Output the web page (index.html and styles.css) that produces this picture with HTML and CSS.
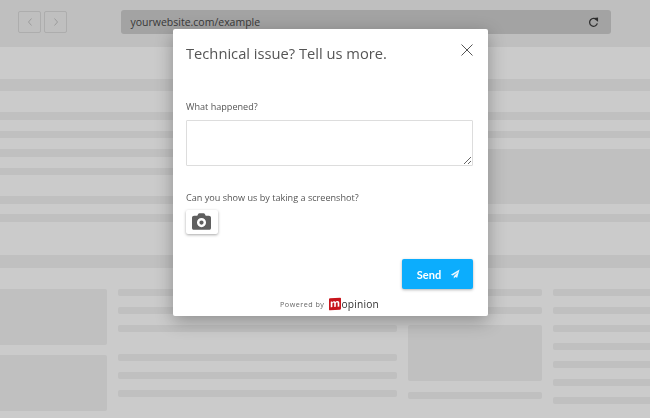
FILE: index.html
```html
<!DOCTYPE html>
<html lang="en">
<head>
  <meta charset="UTF-8">
  <title>Technical issue</title>
  <link rel="stylesheet" href="styles.css">
</head>
<body>

<div class="browser">
  <div class="topbar">
    <div class="nav-btn">
      <svg width="8" height="10" viewBox="0 0 8 10"><path d="M5.500 1.500 2.500 5l3 3.500" /></svg>
    </div>
    <div class="nav-btn">
      <svg width="8" height="10" viewBox="0 0 8 10"><path d="M2.500 1.500 5.500 5l-3 3.500" /></svg>
    </div>
    <div class="urlbar">
      <span>yourwebsite.com/example</span>
      <svg class="reload" width="11" height="11" viewBox="0 0 12 12">
        <path d="M9.600 3.400A4.300 4.300 0 1 0 10.200 7" />
        <path class="fill" d="M6.500 1 11 .6v4.800z" />
      </svg>
    </div>
  </div>

  <div class="hero">
    <div class="bar band"></div>
    <div class="hero-cols">
      <div class="hero-left">
        <div class="bar thin"></div>
        <div class="bar thin"></div>
        <div class="bar thin"></div>
        <div class="bar thin"></div>
        <div class="bar thin last"></div>
      </div>
      <div class="hero-right">
        <div class="bar thin"></div>
        <div class="bar thin"></div>
        <div class="bar block"></div>
      </div>
    </div>
    <div class="bar thin single"></div>
    <div class="bar band lower"></div>
  </div>

  <div class="columns">
    <div class="col col-a">
      <div class="tile"></div>
      <div class="tile"></div>
    </div>
    <div class="col col-b">
      <div class="line"></div>
      <div class="line"></div>
      <div class="line"></div>
      <div class="line gap"></div>
      <div class="line"></div>
      <div class="line"></div>
    </div>
    <div class="col col-c">
      <div class="line"></div>
      <div class="line"></div>
      <div class="tile mid"></div>
      <div class="line"></div>
    </div>
    <div class="col col-d">
      <div class="line"></div>
      <div class="line"></div>
      <div class="line"></div>
      <div class="line"></div>
      <div class="line"></div>
      <div class="line"></div>
      <div class="line"></div>
    </div>
  </div>
</div>

<div class="modal">
  <div class="modal-head">
    <h2>Technical issue? Tell us more.</h2>
    <svg class="close" width="12" height="12" viewBox="0 0 12 12"><path d="M.5.500l11 11M11.500.500l-11 11" /></svg>
  </div>

  <label class="field-label" for="what">What happened?</label>
  <textarea id="what" class="field"></textarea>

  <p class="field-label second">Can you show us by taking a screenshot?</p>
  <button class="shot-btn" aria-label="Add screenshot">
    <svg width="19" height="17" viewBox="0 0 18 16" preserveAspectRatio="none">
      <path fill-rule="evenodd" d="M2 2.500h3L6 .8C6.200.4 6.500.2 7 .2h4c.5 0 .8.2 1 .6l1 1.700h3c1.100 0 2 .9 2 2V14c0 1.100-.9 1.800-2 1.800H2c-1.100 0-2-.7-2-1.800V4.500c0-1.100.9-2 2-2zM9 4.700a4.300 4.300 0 1 0 0 8.600 4.300 4.300 0 0 0 0-8.600zM9 7a2 2 0 1 1 0 4 2 2 0 0 1 0-4z" />
    </svg>
  </button>

  <div class="actions">
    <button class="send-btn">
      Send
      <svg width="10" height="10" viewBox="0 0 10 10">
        <path d="M9.500.5.800 5.700l2 .9L8 3 3.800 7.300v2.200l1.500-1.600 1.900.8z" />
      </svg>
    </button>
  </div>

  <div class="powered">
    <span>Powered by</span>
    <span class="logo"><span class="logo-m">m</span>opinion</span>
  </div>
</div>

</body>
</html>
```

FILE: styles.css
```css
html, body {
  margin: 0;
  height: 100%;
}

body {
  position: relative;
  width: 650px;
  height: 418px;
  overflow: hidden;
  background: #cbcbcb;
  font-family: "Open Sans", sans-serif;
  filter: blur(0.35px);
}

/* greyed out page behind the modal */
.browser {
  height: 418px;
  overflow: hidden;
}

.topbar {
  display: flex;
  align-items: flex-start;
  height: 37px;
  padding: 10px 0 0 18px;
  background: #bfbfbf;
}

.nav-btn {
  display: flex;
  align-items: center;
  justify-content: center;
  box-sizing: border-box;
  width: 23px;
  height: 22px;
  margin: 1px 3px 0 0;
  border: 1px solid #adadad;
  border-radius: 2px;
}

.nav-btn svg path {
  fill: none;
  stroke: #9c9c9c;
  stroke-width: 1;
}

.urlbar {
  display: flex;
  align-items: center;
  justify-content: space-between;
  box-sizing: border-box;
  width: 490px;
  height: 24px;
  margin-left: 51px;
  padding: 0 12px 0 9.500px;
  background: #a3a3a3;
  border-radius: 3px;
  font-size: 10.500px;
  color: #383838;
}

.reload path {
  fill: none;
  stroke: #2e2e2e;
  stroke-width: 1.400;
}

.reload .fill {
  fill: #2e2e2e;
  stroke: none;
}

.hero {
  padding-top: 32px;
}

.bar {
  background: #c0c0c0;
}

.band {
  height: 12px;
}

.hero-cols {
  display: grid;
  grid-template-columns: 325px 325px;
  margin-top: 21px;
}

.thin {
  height: 7.500px;
  margin-bottom: 11px;
}

.thin.last {
  margin-top: 21px;
  margin-bottom: 0;
}

.block {
  height: 55px;
}

.single {
  margin: 10px 0 0;
}

.lower {
  height: 13px;
  margin-top: 33px;
}

.columns {
  display: flex;
  gap: 11px;
  margin-top: 21px;
}

.col {
  flex: none;
  display: flex;
  flex-direction: column;
}

.col-a {
  width: 107px;
  gap: 10px;
}

.col-b {
  width: 279px;
}

.col-c {
  width: 134px;
}

.col-d {
  width: 110px;
}

.tile {
  height: 56px;
  background: #c0c0c0;
  border-radius: 0 2px 2px 0;
}

.mid {
  margin-bottom: 11px;
  border-radius: 2px;
}

.line {
  height: 7.500px;
  margin-bottom: 10.500px;
  background: #c0c0c0;
  border-radius: 2px;
}

.gap {
  margin-top: 11px;
}

/* modal */
.modal {
  position: absolute;
  top: 29px;
  left: 173px;
  box-sizing: border-box;
  width: 314.500px;
  height: 287px;
  padding: 0 14.500px 0 13px;
  background: #fff;
  border-radius: 2px;
  box-shadow: 0 5px 18px rgba(0, 0, 0, 0.3);
  color: #555;
}

.modal-head {
  display: flex;
  align-items: flex-start;
  justify-content: space-between;
  height: 71px;
}

.modal-head h2 {
  margin: 13px 0 0;
  font-size: 14.700px;
  line-height: 22px;
  font-weight: 400;
}

.close {
  margin: 14.500px 0 0;
}

.close path {
  fill: none;
  stroke: #555;
  stroke-width: 1;
}

.field-label {
  display: block;
  margin: 0;
  font-size: 9.100px;
  line-height: 14px;
}

.field {
  display: block;
  box-sizing: border-box;
  width: 100%;
  height: 46px;
  margin: 6px 0 0;
  padding: 4px;
  border: 1px solid #ddd;
  border-radius: 1px;
  outline: none;
  resize: vertical;
}

.second {
  margin-top: 25px;
}

.shot-btn {
  display: flex;
  align-items: center;
  justify-content: center;
  width: 32px;
  height: 24px;
  margin-top: 5px;
  padding: 0 1px 1px 0;
  border: none;
  background: #fff;
  border-radius: 2px;
  box-shadow: 0 1px 3px rgba(0, 0, 0, 0.35);
}

.shot-btn svg path {
  fill: #5f5f5f;
}

.actions {
  display: flex;
  justify-content: flex-end;
  margin-top: 25px;
}

.send-btn {
  display: flex;
  align-items: center;
  justify-content: center;
  gap: 9px;
  box-sizing: border-box;
  width: 71px;
  height: 30px;
  padding: 0 0 0 2px;
  border: none;
  background: #0cadfd;
  border-radius: 2px;
  box-shadow: 0 1px 3px rgba(0, 0, 0, 0.3);
  font-family: "Lato", sans-serif;
  font-size: 11px;
  font-weight: 700;
  color: #fff;
}

.send-btn svg path {
  fill: #e8f6ff;
}

.powered {
  display: flex;
  align-items: center;
  justify-content: center;
  gap: 5px;
  margin-top: 8px;
  font-size: 7.200px;
  letter-spacing: 0.5px;
  color: #666;
}

.logo {
  display: flex;
  align-items: center;
  font-size: 10.200px;
  letter-spacing: 0.2px;
  color: #333;
}

.logo-m {
  display: block;
  width: 12px;
  height: 12px;
  line-height: 10px;
  background: #c8141b;
  border-radius: 1px;
  color: #fff;
  font-weight: 700;
  text-align: center;
  letter-spacing: 0;
  transform: skewY(-4deg);
}
```
